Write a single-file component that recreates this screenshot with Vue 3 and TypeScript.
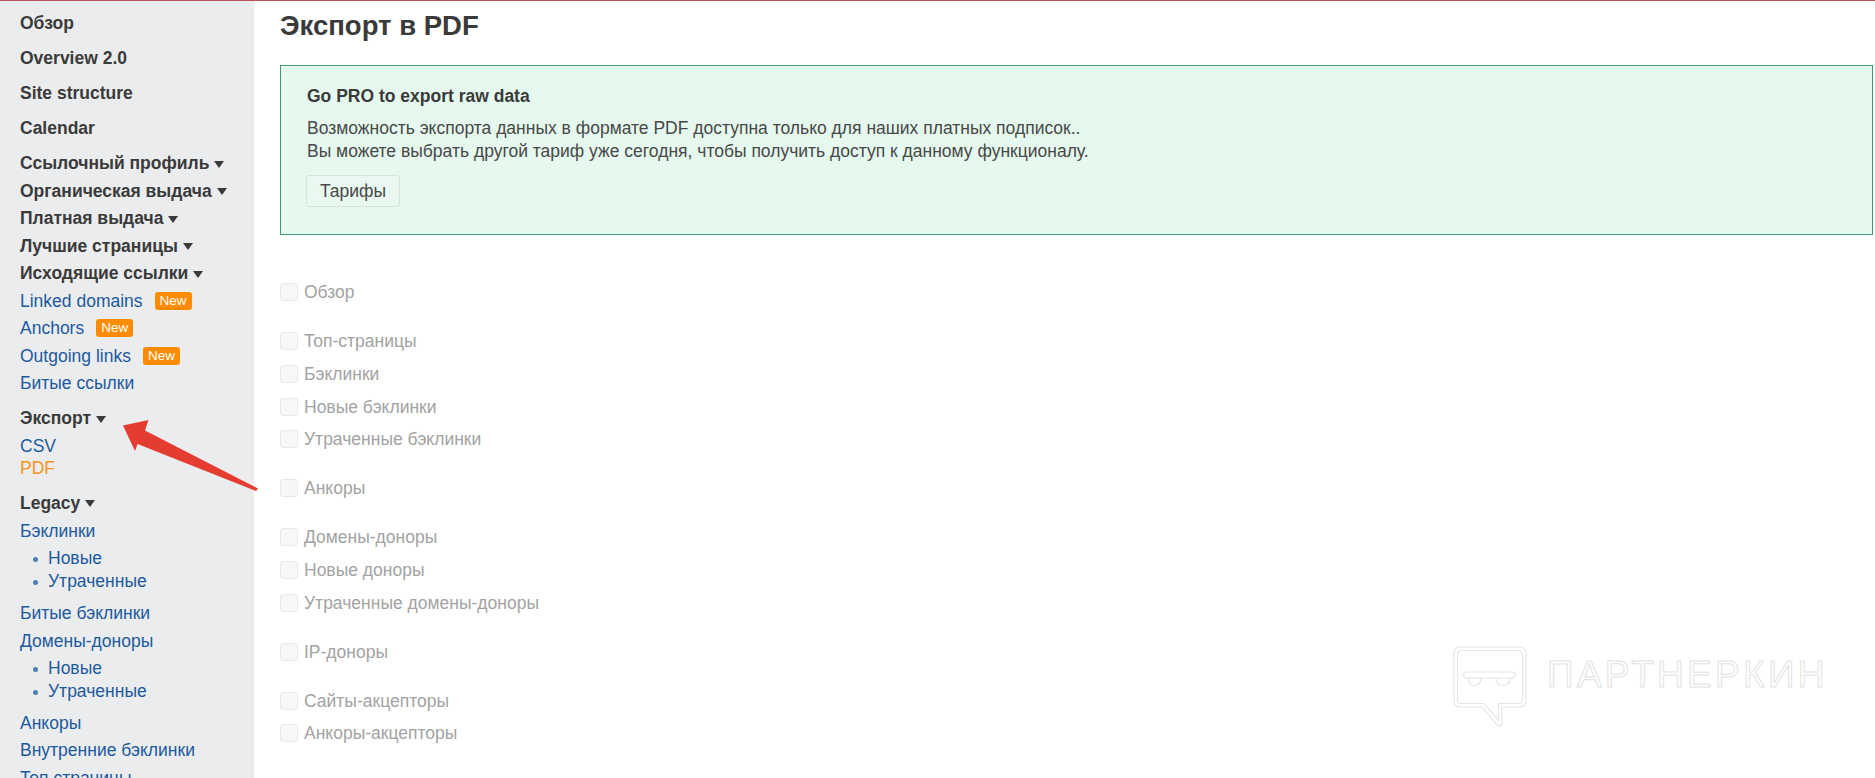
<script setup lang="ts">
type Item = { label: string; kind: 'head' | 'top' | 'link' | 'active'; badge?: boolean; gap?: boolean; sub?: string[] }

const items: Item[] = [
  { label: 'Обзор', kind: 'top' },
  { label: 'Overview 2.0', kind: 'top' },
  { label: 'Site structure', kind: 'top' },
  { label: 'Calendar', kind: 'top' },
  { label: 'Ссылочный профиль', kind: 'head' },
  { label: 'Органическая выдача', kind: 'head' },
  { label: 'Платная выдача', kind: 'head' },
  { label: 'Лучшие страницы', kind: 'head' },
  { label: 'Исходящие ссылки', kind: 'head' },
  { label: 'Linked domains', kind: 'link', badge: true },
  { label: 'Anchors', kind: 'link', badge: true },
  { label: 'Outgoing links', kind: 'link', badge: true },
  { label: 'Битые ссылки', kind: 'link' },
  { label: 'Экспорт', kind: 'head', gap: true },
  { label: 'CSV', kind: 'link' },
  { label: 'PDF', kind: 'active' },
  { label: 'Legacy', kind: 'head', gap: true },
  { label: 'Бэклинки', kind: 'link', sub: ['Новые', 'Утраченные'] },
  { label: 'Битые бэклинки', kind: 'link' },
  { label: 'Домены-доноры', kind: 'link', sub: ['Новые', 'Утраченные'] },
  { label: 'Анкоры', kind: 'link' },
  { label: 'Внутренние бэклинки', kind: 'link' },
  { label: 'Топ страницы', kind: 'link' },
]

const groups: string[][] = [
  ['Обзор'],
  ['Топ-страницы', 'Бэклинки', 'Новые бэклинки', 'Утраченные бэклинки'],
  ['Анкоры'],
  ['Домены-доноры', 'Новые доноры', 'Утраченные домены-доноры'],
  ['IP-доноры'],
  ['Сайты-акцепторы', 'Анкоры-акцепторы'],
]
</script>

<template>
  <div class="page">
    <aside class="side">
      <template v-for="it in items" :key="it.label">
        <div class="item" :class="[it.kind, { gap: it.gap, 'has-sub': it.sub }]">
          <span>{{ it.label }}</span>
          <i v-if="it.kind === 'head'" class="caret"></i>
          <b v-if="it.badge" class="badge">New</b>
        </div>
        <ul v-if="it.sub" class="sub">
          <li v-for="s in it.sub" :key="s">{{ s }}</li>
        </ul>
      </template>
    </aside>

    <main class="main">
      <h1 class="title">Экспорт в PDF</h1>
      <section class="alert">
        <h2>Go PRO to export raw data</h2>
        <p>Возможность экспорта данных в формате PDF доступна только для наших платных подписок..<br>Вы можете выбрать другой тариф уже сегодня, чтобы получить доступ к данному функционалу.</p>
        <button type="button" class="btn">Тарифы</button>
      </section>

      <form class="options">
        <div v-for="(g, i) in groups" :key="i" class="group">
          <label v-for="o in g" :key="o" class="opt">
            <span class="box"></span>{{ o }}
          </label>
        </div>
      </form>
    </main>

    <svg class="arrow" width="150" height="90" viewBox="115 415 150 90" aria-hidden="true">
      <path d="M123 425.500 L148.500 420 L145 430.500 L258 488.500 L256 491 L137.500 444 L135 451 Z" fill="#e53c32" />
    </svg>

    <div class="mark">
      <svg width="74" height="82" viewBox="0 0 74 82" fill="none" stroke="#e5e5e5" stroke-width="1.200" aria-hidden="true">
        <path d="M7 1 H66 Q73 1 73 8 V54 Q73 61 66 61 H49 V77 Q49 80 46.500 80 Q45 80 44 78.500 L29 61 H7 Q1 61 1 54 V8 Q1 1 7 1 Z" />
        <path d="M8 4.500 H65 Q69.500 4.500 69.500 9 V53 Q69.500 57.500 65 57.500 H45.500 V74 L31 57.500 H8 Q4.500 57.500 4.500 53 V9 Q4.500 4.500 8 4.500 Z" />
        <rect x="10.500" y="26" width="52" height="6" rx="3" />
        <path d="M15 32 Q15 39.500 21.500 39.500 Q28 39.500 28 32" />
        <path d="M43 32 Q43 39.500 50 39.500 Q57 39.500 57 32" />
      </svg>
      <span class="mark-text">ПАРТНЕРКИН</span>
    </div>
  </div>
</template>

<style>
html, body { margin: 0; overflow: hidden; background: #fff; }
</style>

<style scoped>
.page {
  position: relative;
  display: flex;
  height: 778px;
  overflow: hidden;
  border-top: 1px solid #b8555a;
  box-sizing: border-box;
  font: 17.500px/22px "Liberation Sans", Arial, sans-serif;
  color: #3a3a3a;
}
.side {
  flex: 0 0 254px;
  box-sizing: border-box;
  padding: 11px 0 0 20px;
  background: #ebecee;
}
.item { display: flex; align-items: center; height: 22px; margin-bottom: 5.500px; white-space: nowrap; }
.item.top { font-weight: 700; margin-bottom: 13px; }
.item.head { font-weight: 700; }
.item.link { color: #1c5a9e; }
.item.active { color: #f7931e; }
.item.gap { margin-top: 13px; }
.item.gap:has(+ .has-sub) { margin-bottom: 6.500px; }
.item.has-sub { margin-bottom: 5px; }
.item:has(+ .item.active), .item.active { margin-bottom: 0; }
.caret {
  width: 0; height: 0;
  margin: 2px 0 0 5px;
  border: 5px solid transparent;
  border-top: 7px solid #3a3a3a;
  border-bottom: 0;
}
.badge {
  margin-left: 12px;
  padding: 0 5px;
  height: 18px;
  line-height: 18px;
  border-radius: 3px;
  background: #ff8c00;
  color: #fff;
  font-size: 13.500px;
  font-weight: 400;
}
.sub { list-style: none; margin: 0 0 9px; padding: 0 0 0 28px; color: #1c5a9e; }
.sub li { position: relative; height: 23px; line-height: 23px; }
.sub li::before {
  content: "";
  position: absolute;
  left: -15px; top: 10px;
  width: 5px; height: 5px;
  border-radius: 50%;
  background: #4d7fb5;
}
.main { flex: 1; min-width: 0; padding: 0 2px 0 26px; }
.title {
  margin: 0;
  font-size: 27.500px;
  line-height: 30px;
  padding-top: 10px;
  font-weight: 700;
}
.alert {
  box-sizing: border-box;
  height: 170px;
  margin-top: 24px;
  padding: 19px 26px 0;
  background: #e5f9ef;
  border: 1px solid #3f9a73;
}
.alert h2 { margin: 0; font-size: 17.500px; line-height: 22px; font-weight: 700; }
.alert p { margin: 10px 0 0; line-height: 23px; color: #484848; }
.btn {
  display: block;
  width: 94px;
  height: 32px;
  margin: 12px 0 0 -1px;
  padding: 0;
  background: #e9f8f0;
  border: 1px solid #d3e6dc;
  border-radius: 3px;
  font: 17.500px "Liberation Sans", Arial, sans-serif;
  color: #484848;
}
.options { margin-top: 41px; color: #a3a3a3; }
.group { margin-bottom: 16.300px; }
.opt { display: flex; align-items: center; height: 32.700px; }
.box {
  box-sizing: border-box;
  flex: none;
  width: 18px; height: 18px;
  margin-right: 6px;
  background: #f7f7f7;
  border: 1px solid #e9e9e9;
  border-radius: 3px;
}
.arrow { position: absolute; left: 115px; top: 414px; }
.mark {
  position: absolute;
  left: 1453px; top: 645px;
  display: flex;
  align-items: flex-start;
  gap: 20px;
}
.mark-text {
  margin-top: 8px;
  font-size: 37px;
  line-height: 42px;
  letter-spacing: 3.300px;
  color: transparent;
  -webkit-text-stroke: 1px #e2e2e2;
}
</style>
